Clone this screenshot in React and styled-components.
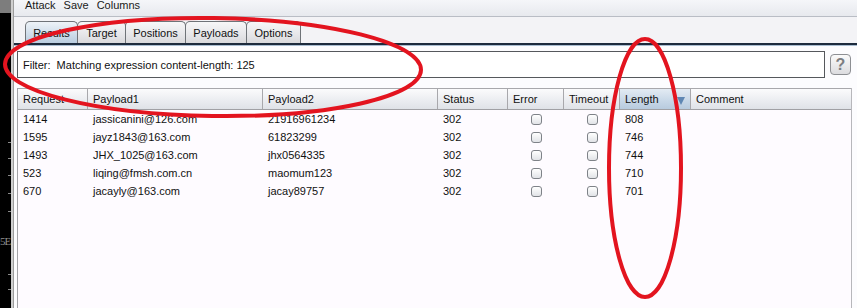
import React from "react";
import styled, { createGlobalStyle } from "styled-components";

const Global = createGlobalStyle`
  html, body { margin: 0; padding: 0; background: #000; }
  body { font-family: "Liberation Sans", Arial, sans-serif; font-size: 11px; color: #111; }
`;

const Root = styled.div`
  position: relative;
  display: flex;
  width: 857px;
  height: 308px;
  overflow: hidden;
`;

const Desktop = styled.div`
  width: 11px;
  flex: none;
  background: #000;
  display: flex;
  flex-direction: column;
  align-items: flex-end;
`;

const DesktopTop = styled.div`
  width: 11px;
  height: 13px;
  background: #7d7d7d;
`;

const Tick = styled.div`
  width: 3px;
  height: 1px;
  margin-top: ${(p) => p.$gap}px;
  background: #8a8a8a;
`;

const DesktopText = styled.div`
  align-self: flex-start;
  margin-top: 23px;
  font-family: "Liberation Serif", serif;
  font-size: 11px;
  line-height: 12px;
  letter-spacing: -1px;
  color: #8e8e8e;
`;

const Frame = styled.div`
  width: 2px;
  flex: none;
  background: #cfcfcf;
  border-right: 1px solid #9c9c9c;
`;

const Window = styled.div`
  flex: 1;
  display: flex;
  flex-direction: column;
  background: #f3f3f6;
  min-width: 0;
`;

const MenuBar = styled.div`
  height: 16px;
  display: flex;
  gap: 8px;
  padding-left: 11px;
  align-items: flex-start;
  background: linear-gradient(#f5f6f9, #e7e9ee);
  border-bottom: 1px solid #b9bdc5;
  line-height: 11px;
`;

const MenuItem = styled.span`
  color: #1a1a1a;
`;

const TabStrip = styled.div`
  display: flex;
  align-items: flex-end;
  padding-left: 11px;
  margin-top: 4px;
  height: 22px;
`;

const Tab = styled.div`
  width: ${(p) => p.$w}px;
  box-sizing: border-box;
  height: 22px;
  border: 1px solid #6f7378;
  border-bottom: none;
  border-radius: 5px 5px 0 0;
  margin-right: -1px;
  display: flex;
  align-items: center;
  justify-content: center;
  background: ${(p) =>
    p.$active
      ? "linear-gradient(#eef3f8, #c9d8e7 70%, #b9cde0)"
      : "linear-gradient(#f7f7f8, #e6e6e9 60%, #d9d9dc)"};
  color: #111;
`;

const TabLine = styled.div`
  height: 2px;
  background: #1d2b3d;
  border-bottom: 1px solid #a9bdd1;
`;

const Panel = styled.div`
  flex: 1;
  display: flex;
  flex-direction: column;
  padding: 5px 5px 0 3px;
  background: #fcfcfe;
  min-height: 0;
`;

const FilterRow = styled.div`
  display: flex;
  align-items: center;
  gap: 5px;
  height: 27px;
`;

const FilterBox = styled.div`
  flex: 1;
  height: 27px;
  box-sizing: border-box;
  border: 1px solid #55585c;
  background: #fff;
  display: flex;
  align-items: center;
  padding-left: 5px;
  padding-top: 1px;
  white-space: pre;
`;

const HelpButton = styled.div`
  width: 21px;
  height: 21px;
  box-sizing: border-box;
  border: 1px solid #8d8f93;
  border-radius: 4px;
  background: linear-gradient(#fafafa, #dcdcdf);
  display: flex;
  align-items: center;
  justify-content: center;
  font-size: 16px;
  font-weight: bold;
  color: #7c7e82;
  margin-right: 1px;
`;

const Table = styled.div`
  flex: 1;
  margin-top: 10px;
  border-left: 1px solid #a3a3a7;
  border-right: 1px solid #b7b7bb;
  background: #fefbff;
  display: flex;
  flex-direction: column;
`;

const cols = "70px 175px 175px 70px 56px 56px 71px 1fr";

const HeaderRow = styled.div`
  display: grid;
  grid-template-columns: ${cols};
  height: 22px;
  border-top: 1px solid #a8a8ac;
  border-bottom: 1px solid #a0a0a4;
  background: linear-gradient(#fbfbfc, #eaecf0 60%, #dfe2e7);
  box-sizing: border-box;
`;

const HeaderCell = styled.div`
  position: relative;
  display: flex;
  align-items: center;
  padding-left: 5px;
  border-right: 1px solid #a8a8ac;
  background: ${(p) =>
    p.$sorted ? "linear-gradient(#e3ebf3, #c7d7e7 60%, #b8cbde)" : "transparent"};
  &:last-child { border-right: none; }
`;

const SortArrow = styled.span`
  position: absolute;
  right: 5px;
  top: 8px;
  width: 0;
  height: 0;
  border-left: 4px solid transparent;
  border-right: 4px solid transparent;
  border-top: 8px solid #5f87b3;
`;

const Row = styled.div`
  display: grid;
  grid-template-columns: ${cols};
  height: 18px;
`;

const Cell = styled.div`
  display: flex;
  align-items: center;
  padding-left: ${(p) => (p.$center ? 0 : 5)}px;
  justify-content: ${(p) => (p.$center ? "center" : "flex-start")};
  white-space: nowrap;
`;

const Check = styled.span`
  width: 11px;
  height: 11px;
  box-sizing: border-box;
  border: 1px solid #7e8288;
  border-radius: 3px;
  background: linear-gradient(#ffffff, #e1e3e7);
`;

const Annotations = styled.svg`
  position: absolute;
  left: 0;
  top: 0;
  pointer-events: none;
`;

const ticksTop = [129, 15, 16, 17, 17];
const ticksBottom = [27, 14];

const rows = [
  ["1414", "jassicanini@126.com", "21916961234", "302", "808"],
  ["1595", "jayz1843@163.com", "61823299", "302", "746"],
  ["1493", "JHX_1025@163.com", "jhx0564335", "302", "744"],
  ["523", "liqing@fmsh.com.cn", "maomum123", "302", "710"],
  ["670", "jacayly@163.com", "jacay89757", "302", "701"],
];

const tabs = [
  ["Results", 53, true],
  ["Target", 49],
  ["Positions", 61],
  ["Payloads", 62],
  ["Options", 55],
];

export default function App() {
  return (
    <Root>
      <Global />
      <Desktop>
        <DesktopTop />
        {ticksTop.map((g, i) => (
          <Tick key={i} $gap={g} />
        ))}
        <DesktopText>5E</DesktopText>
        {ticksBottom.map((g, i) => (
          <Tick key={"b" + i} $gap={g} />
        ))}
      </Desktop>
      <Frame />
      <Window>
        <MenuBar>
          <MenuItem>Attack</MenuItem>
          <MenuItem>Save</MenuItem>
          <MenuItem>Columns</MenuItem>
        </MenuBar>
        <TabStrip>
          {tabs.map(([t, w, a]) => (
            <Tab key={t} $w={w} $active={a}>
              {t}
            </Tab>
          ))}
        </TabStrip>
        <TabLine />
        <Panel>
          <FilterRow>
            <FilterBox>Filter:  Matching expression content-length: 125</FilterBox>
            <HelpButton>?</HelpButton>
          </FilterRow>
          <Table>
            <HeaderRow>
              <HeaderCell>Request</HeaderCell>
              <HeaderCell>Payload1</HeaderCell>
              <HeaderCell>Payload2</HeaderCell>
              <HeaderCell>Status</HeaderCell>
              <HeaderCell>Error</HeaderCell>
              <HeaderCell>Timeout</HeaderCell>
              <HeaderCell $sorted>
                Length
                <SortArrow />
              </HeaderCell>
              <HeaderCell>Comment</HeaderCell>
            </HeaderRow>
            {rows.map((r) => (
              <Row key={r[0]}>
                <Cell>{r[0]}</Cell>
                <Cell>{r[1]}</Cell>
                <Cell>{r[2]}</Cell>
                <Cell>{r[3]}</Cell>
                <Cell $center>
                  <Check />
                </Cell>
                <Cell $center>
                  <Check />
                </Cell>
                <Cell>{r[4]}</Cell>
                <Cell />
              </Row>
            ))}
          </Table>
        </Panel>
      </Window>
      <Annotations width="857" height="308" viewBox="0 0 857 308">
        <ellipse cx="213" cy="67" rx="208" ry="49" fill="none" stroke="#e3141f" strokeWidth="4" transform="rotate(0.8 213 67)" />
        <ellipse cx="645" cy="168" rx="36" ry="129" fill="none" stroke="#e3141f" strokeWidth="4" />
      </Annotations>
    </Root>
  );
}
